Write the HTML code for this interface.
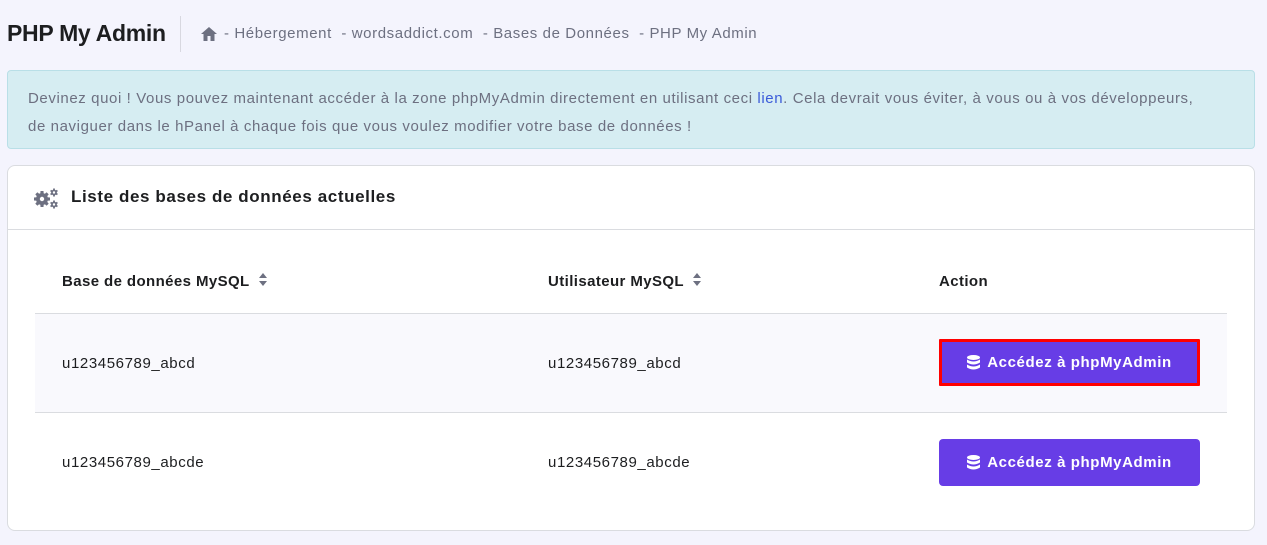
<!DOCTYPE html>
<html><head><meta charset="utf-8"><style>
*{margin:0;padding:0;box-sizing:border-box}
body{width:1267px;height:545px;background:#f4f4fd;font-family:"Liberation Sans",sans-serif;color:#2f1c6a;position:relative;overflow:hidden}
.abs{position:absolute}
h1{position:absolute;left:7px;top:20px;font-size:23px;font-weight:bold;color:#1d1e20;letter-spacing:-0.3px}
.sep{left:180px;top:16px;width:1px;height:36px;background:#d8d8e0}
.bc{left:200px;top:25px;font-size:15px;color:#6d7081;display:flex;align-items:center;gap:6px;letter-spacing:0.6px}
.alert{left:7px;top:70px;width:1248px;height:79px;background:#d6edf2;border:1px solid #b9dfe7;border-radius:4px;padding:14px 20px;font-size:15px;line-height:28px;color:#6d7081;letter-spacing:0.6px}
.alert a{color:#3a5bd9;text-decoration:none}
.card{left:7px;top:165px;width:1248px;height:366px;background:#fff;border:1px solid #dadce0;border-radius:8px}
.ct{left:71px;top:187px;font-size:17px;font-weight:bold;color:#1d1e20;letter-spacing:0.6px}
.hline{left:8px;top:229px;width:1246px;height:1px;background:#dadce0}
.th{top:273px;font-size:15px;font-weight:bold;color:#1d1e20;letter-spacing:0.4px}
.row1{left:35px;top:313px;width:1192px;height:100px;background:#f9f9fd;border-top:1px solid #dadce0;border-bottom:1px solid #dadce0}
.td{font-size:15px;color:#1d1e20;letter-spacing:0.6px}
.btn{width:261px;height:47px;background:#673de6;border-radius:4px;color:#fff;font-weight:bold;font-size:15px;display:flex;align-items:center;justify-content:center;gap:7px;letter-spacing:0.6px}
</style></head><body>
<h1>PHP My Admin</h1>
<div class="abs sep"></div>
<div class="abs bc"><svg width="18" height="16" viewBox="0 0 18 16"><path d="M9 1L1 8h2.5v7h4v-5h3v5h4V8H17z" fill="#6d7081"/></svg><span>- Hébergement &nbsp;- wordsaddict.com &nbsp;- Bases de Données &nbsp;- PHP My Admin</span></div>
<div class="abs alert">Devinez quoi ! Vous pouvez maintenant accéder à la zone phpMyAdmin directement en utilisant ceci <a>lien</a>. Cela devrait vous éviter, à vous ou à vos développeurs,<br>de naviguer dans le hPanel à chaque fois que vous voulez modifier votre base de données !</div>
<div class="abs card"></div>
<svg class="abs" style="left:33px;top:188px" width="26" height="22" viewBox="0 0 26 22">
<g fill="#6d7081">
<g transform="translate(9,11)"><rect x="-1.6" y="-8" width="3.2" height="16" rx="0.6"/><rect x="-1.6" y="-8" width="3.2" height="16" rx="0.6" transform="rotate(45)"/><rect x="-1.6" y="-8" width="3.2" height="16" rx="0.6" transform="rotate(90)"/><rect x="-1.6" y="-8" width="3.2" height="16" rx="0.6" transform="rotate(135)"/><circle r="6"/></g>
<circle cx="9" cy="11" r="2.2" fill="#fff"/>
<g transform="translate(21,4.5)"><rect x="-0.9" y="-4" width="1.8" height="8"/><rect x="-0.9" y="-4" width="1.8" height="8" transform="rotate(60)"/><rect x="-0.9" y="-4" width="1.8" height="8" transform="rotate(120)"/><circle r="2.9"/><circle r="1.2" fill="#fff"/></g>
<g transform="translate(21,16.5)"><rect x="-0.9" y="-4" width="1.8" height="8"/><rect x="-0.9" y="-4" width="1.8" height="8" transform="rotate(60)"/><rect x="-0.9" y="-4" width="1.8" height="8" transform="rotate(120)"/><circle r="2.9"/><circle r="1.2" fill="#fff"/></g>
</g></svg>
<div class="abs ct">Liste des bases de données actuelles</div>
<div class="abs hline"></div>
<div class="abs th" style="left:62px">Base de données MySQL <svg width="10" height="13" viewBox="0 0 10 13" style="margin-left:4px"><path d="M5 0L9 5H1zM5 13L1 8h8z" fill="#6d7081"/></svg></div>
<div class="abs th" style="left:548px">Utilisateur MySQL <svg width="10" height="13" viewBox="0 0 10 13" style="margin-left:4px"><path d="M5 0L9 5H1zM5 13L1 8h8z" fill="#6d7081"/></svg></div>
<div class="abs th" style="left:939px">Action</div>
<div class="abs row1"></div>
<div class="abs td" style="left:62px;top:355px">u123456789_abcd</div>
<div class="abs td" style="left:548px;top:355px">u123456789_abcd</div>
<div class="abs btn" style="left:939px;top:339px;border:3px solid #f00;border-radius:1px"><svg width="13" height="15" viewBox="0 0 13 15"><ellipse cx="6.5" cy="2.5" rx="6.5" ry="2.5" fill="#fff"/><path d="M0 4.5q6.5 4 13 0v3q-6.5 4-13 0zM0 9.5q6.5 4 13 0v3q-6.5 4-13 0z" fill="#fff"/></svg>Accédez à phpMyAdmin</div>
<div class="abs td" style="left:62px;top:454px">u123456789_abcde</div>
<div class="abs td" style="left:548px;top:454px">u123456789_abcde</div>
<div class="abs btn" style="left:939px;top:439px"><svg width="13" height="15" viewBox="0 0 13 15"><ellipse cx="6.5" cy="2.5" rx="6.5" ry="2.5" fill="#fff"/><path d="M0 4.5q6.5 4 13 0v3q-6.5 4-13 0zM0 9.5q6.5 4 13 0v3q-6.5 4-13 0z" fill="#fff"/></svg>Accédez à phpMyAdmin</div>
</body></html>
